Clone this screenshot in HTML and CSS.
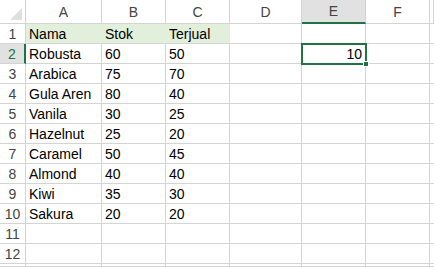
FILE: index.html
```html
<!DOCTYPE html>
<html lang="en">
<head>
  <meta charset="UTF-8" />
  <title>Sheet1</title>
  <link rel="stylesheet" href="styles.css">
</head>
<body>
  <div class="sheet">
    <div class="corner"><span class="corner-mark"></span></div>
    <div class="col-head">A</div>
    <div class="col-head">B</div>
    <div class="col-head">C</div>
    <div class="col-head">D</div>
    <div class="col-head active">E</div>
    <div class="col-head">F</div>
    <div class="col-head"></div>

    <div class="row-head">1</div>
    <div class="cell fill">Nama</div><div class="cell fill">Stok</div><div class="cell fill">Terjual</div>
    <div class="cell"></div><div class="cell"></div><div class="cell"></div><div class="cell"></div>

    <div class="row-head active">2</div>
    <div class="cell">Robusta</div><div class="cell">60</div><div class="cell">50</div>
    <div class="cell"></div><div class="cell num selected">10<span class="handle"></span></div><div class="cell"></div><div class="cell"></div>

    <div class="row-head">3</div>
    <div class="cell">Arabica</div><div class="cell">75</div><div class="cell">70</div>
    <div class="cell"></div><div class="cell"></div><div class="cell"></div><div class="cell"></div>

    <div class="row-head">4</div>
    <div class="cell">Gula Aren</div><div class="cell">80</div><div class="cell">40</div>
    <div class="cell"></div><div class="cell"></div><div class="cell"></div><div class="cell"></div>

    <div class="row-head">5</div>
    <div class="cell">Vanila</div><div class="cell">30</div><div class="cell">25</div>
    <div class="cell"></div><div class="cell"></div><div class="cell"></div><div class="cell"></div>

    <div class="row-head">6</div>
    <div class="cell">Hazelnut</div><div class="cell">25</div><div class="cell">20</div>
    <div class="cell"></div><div class="cell"></div><div class="cell"></div><div class="cell"></div>

    <div class="row-head">7</div>
    <div class="cell">Caramel</div><div class="cell">50</div><div class="cell">45</div>
    <div class="cell"></div><div class="cell"></div><div class="cell"></div><div class="cell"></div>

    <div class="row-head">8</div>
    <div class="cell">Almond</div><div class="cell">40</div><div class="cell">40</div>
    <div class="cell"></div><div class="cell"></div><div class="cell"></div><div class="cell"></div>

    <div class="row-head">9</div>
    <div class="cell">Kiwi</div><div class="cell">35</div><div class="cell">30</div>
    <div class="cell"></div><div class="cell"></div><div class="cell"></div><div class="cell"></div>

    <div class="row-head">10</div>
    <div class="cell">Sakura</div><div class="cell">20</div><div class="cell">20</div>
    <div class="cell"></div><div class="cell"></div><div class="cell"></div><div class="cell"></div>

    <div class="row-head">11</div>
    <div class="cell"></div><div class="cell"></div><div class="cell"></div>
    <div class="cell"></div><div class="cell"></div><div class="cell"></div><div class="cell"></div>

    <div class="row-head">12</div>
    <div class="cell"></div><div class="cell"></div><div class="cell"></div>
    <div class="cell"></div><div class="cell"></div><div class="cell"></div><div class="cell"></div>

    <div class="row-head"></div>
    <div class="cell"></div><div class="cell"></div><div class="cell"></div>
    <div class="cell"></div><div class="cell"></div><div class="cell"></div><div class="cell"></div>
  </div>
</body>
</html>
```

FILE: styles.css
```css
:root {
  --grid-line: #d4d4d4;
  --head-text: #444;
  --head-active-bg: #e1e1e1;
  --excel-green: #217346;
  --fill-green: #e2efda;
}

* {
  box-sizing: border-box;
}

body {
  margin: 0;
  background: #fff;
  font-family: "Liberation Sans", Arial, sans-serif;
  font-size: 14px;
  color: #000;
  overflow: hidden;
}

.sheet {
  display: grid;
  grid-template-columns: 26px 76px 64px 64px 72px 64px 64px 4px;
  grid-template-rows: 24px repeat(12, 20px) 3px;
  width: 434px;
  height: 267px;
  overflow: hidden;
}

.corner {
  position: relative;
  border-right: 1px solid var(--grid-line);
  border-bottom: 1px solid var(--grid-line);
}

.corner-mark {
  position: absolute;
  right: 3px;
  bottom: 3px;
  width: 0;
  height: 0;
  border-left: 12px solid transparent;
  border-bottom: 12px solid #dfdfdf;
}

.col-head {
  border-right: 1px solid var(--grid-line);
  border-bottom: 1px solid var(--grid-line);
  color: var(--head-text);
  text-align: center;
  line-height: 24px;
  font-size: 14px;
  overflow: hidden;
}

.col-head.active {
  background: var(--head-active-bg);
  border-bottom: 2px solid var(--excel-green);
  line-height: 23px;
}

.row-head {
  border-right: 1px solid var(--grid-line);
  border-bottom: 1px solid var(--grid-line);
  color: var(--head-text);
  text-align: center;
  line-height: 20px;
  font-size: 14px;
  overflow: hidden;
}

.row-head.active {
  background: var(--head-active-bg);
  color: var(--excel-green);
  border-right: 2px solid var(--excel-green);
}

.cell {
  position: relative;
  border-right: 1px solid var(--grid-line);
  border-bottom: 1px solid var(--grid-line);
  padding: 0 3px;
  line-height: 20px;
  white-space: nowrap;
}

.cell.fill {
  background: var(--fill-green);
  border-right-color: var(--fill-green);
}

.cell.num {
  text-align: right;
}

.cell.selected {
  outline: 2px solid var(--excel-green);
  outline-offset: -1px;
  z-index: 1;
}

.handle {
  position: absolute;
  right: -4px;
  bottom: -4px;
  width: 6px;
  height: 6px;
  background: var(--excel-green);
  border: 1px solid #fff;
}
```
